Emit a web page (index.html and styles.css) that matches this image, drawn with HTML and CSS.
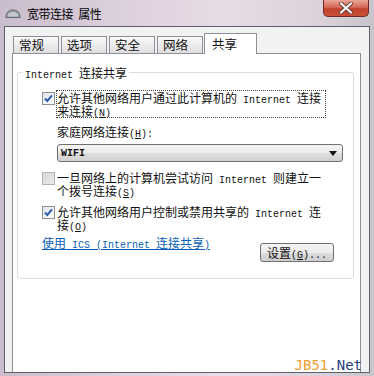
FILE: index.html
```html
<!DOCTYPE html>
<html lang="zh-CN">
<head>
<meta charset="utf-8">
<title>宽带连接 属性</title>
<link rel="stylesheet" href="styles.css">
</head>
<body>
<div class="window">
  <div class="titlebar">
    <svg class="ticon" width="16" height="9" viewBox="0 0 16 9">
      <path d="M1 8.5 C1 3.5 4 1 8 1 C12 1 15 3.5 15 8.5 Z" fill="#9aa0a8" stroke="#60656e" stroke-width="1"/>
      <path d="M4 7.5 V4.5 M6 7.5 V3.5 M8 7.5 V3 M10 7.5 V3.5 M12 7.5 V4.5" stroke="#f2f4f6" stroke-width="1"/>
    </svg>
    <span class="title">宽带连接 属性</span>
    <div class="close">
      <svg width="16" height="12" viewBox="0 0 16 12">
        <path d="M3 1.5 L13 10.5 M13 1.5 L3 10.5" stroke="#6b3a33" stroke-width="4" stroke-linecap="round"/>
        <path d="M3 1.5 L13 10.5 M13 1.5 L3 10.5" stroke="#ffffff" stroke-width="2.2" stroke-linecap="round"/>
      </svg>
    </div>
  </div>
  <div class="client">
    <div class="tabs">
      <div class="tab">常规</div>
      <div class="tab">选项</div>
      <div class="tab">安全</div>
      <div class="tab">网络</div>
      <div class="tab tab-active">共享</div>
    </div>
    <div class="panel">
      <fieldset class="group">
        <legend class="group-title"><span class="en">Internet </span>连接共享</legend>
        <div class="group-body">
          <div class="opt">
            <span class="cb cb-checked">
              <svg width="13" height="13" viewBox="0 0 13 13"><path d="M3 6.5 L5.3 9 L10 3.3" fill="none" stroke="#2c5fae" stroke-width="2"/></svg>
            </span>
            <span class="lbl lbl-focus">允许其他网络用户通过此计算机的<span class="en"> Internet </span>连接来连接<span class="en">(<u>N</u>)</span></span>
          </div>
          <div class="field-label">家庭网络连接<span class="en">(<u>H</u>):</span></div>
          <div class="select">
            <span class="select-value">WIFI</span>
            <svg width="8" height="5" viewBox="0 0 8 5"><path d="M0 0 H8 L4 5 Z" fill="#111"/></svg>
          </div>
          <div class="opt opt-second">
            <span class="cb cb-disabled"></span>
            <span class="lbl">一旦网络上的计算机尝试访问<span class="en"> Internet </span>则建立一个拨号连接<span class="en">(<u>S</u>)</span></span>
          </div>
          <div class="opt opt-third">
            <span class="cb cb-checked">
              <svg width="13" height="13" viewBox="0 0 13 13"><path d="M3 6.5 L5.3 9 L10 3.3" fill="none" stroke="#2c5fae" stroke-width="2"/></svg>
            </span>
            <span class="lbl">允许其他网络用户控制或禁用共享的<span class="en"> Internet </span>连接<span class="en">(<u>O</u>)</span></span>
          </div>
          <div class="footer-row">
            <a class="link" href="#">使用<span class="en"> ICS (Internet </span>连接共享<span class="en">)</span></a>
            <div class="btn">设置<span class="en">(<u>G</u>)...</span></div>
          </div>
        </div>
      </fieldset>
    </div>
  </div>
  <div class="watermark"><span class="wm-a">JB51</span><span class="wm-b">.Net</span></div>
</div>
</body>
</html>
```
FILE: styles.css
```css
* { box-sizing: border-box; }
html, body { margin: 0; padding: 0; }
body {
  width: 374px;
  height: 376px;
  overflow: hidden;
  font-family: "Noto Sans CJK SC", sans-serif;
  font-size: 12px;
  color: #111;
}
.en {
  font-family: "Liberation Mono", monospace;
  font-size: 10px;
  line-height: 0;
}
.window {
  position: relative;
  height: 376px;
  padding: 0 4px 3px 4px;
  display: flex;
  flex-direction: column;
  background: linear-gradient(90deg, #c9bccc 0%, #dccfdc 30%, #e8dce6 60%, #ddd2dc 85%, #c8c4cc 100%);
}
.titlebar {
  height: 26px;
  flex-shrink: 0;
  display: flex;
  align-items: center;
}
.ticon { margin-left: 1px; margin-top: 1px; }
.title {
  margin-left: 6px;
  font-size: 12px;
  letter-spacing: -0.5px;
  word-spacing: 3px;
  color: #000;
}
.close {
  margin-left: auto;
  margin-right: 1px;
  align-self: flex-start;
  width: 46px;
  height: 17px;
  border: 1px solid #6e2c24;
  border-top: none;
  border-radius: 0 0 5px 5px;
  background: linear-gradient(#e9a598 0%, #d46a58 45%, #c2412c 55%, #c9503a 100%);
  display: flex;
  align-items: center;
  justify-content: center;
}
.client {
  flex: 1;
  background: #f2f2f2;
  border: 1px solid #5d5f66;
  padding: 6px 8px 0 7px;
  display: flex;
  flex-direction: column;
}
.tabs {
  height: 20px;
  flex-shrink: 0;
  display: flex;
  align-items: flex-end;
  gap: 2px;
  padding-left: 1px;
  position: relative;
  z-index: 1;
}
.tab {
  width: 46px;
  height: 17px;
  padding-left: 5px;
  border: 1px solid #8d9099;
  border-bottom: none;
  background: linear-gradient(#fbfbfb, #ececec 50%, #dedede);
  line-height: 16px;
  font-size: 12.5px;
  color: #111;
}
.tab-active {
  width: 53px;
  height: 21px;
  margin-left: -1px;
  margin-bottom: -1px;
  padding-left: 7px;
  background: #fff;
  line-height: 19px;
}
.panel {
  flex: 1;
  background: #fff;
  border: 1px solid #8d9099;
  border-bottom: none;
}
.group {
  margin: 12px 0 0 4px;
  padding: 0;
  width: 337px;
  min-width: 0;
  border: 1px solid #d5dfe5;
  border-radius: 3px;
}
.group-title {
  margin-left: 5px;
  padding: 0 2px;
  line-height: 13px;
}
.group-body {
  padding: 11px 0 16px 24px;
  display: flex;
  flex-direction: column;
  align-items: flex-start;
}
.opt {
  display: flex;
  align-items: flex-start;
  line-height: 13px;
}
.opt-second { margin-top: 8px; }
.opt-third { margin-top: 6px; }
.cb {
  width: 13px;
  height: 13px;
  margin-top: 2px;
  margin-right: 1px;
  flex-shrink: 0;
  display: block;
}
.cb svg { display: block; }
.cb-checked {
  border: 1px solid #8e8f8f;
  background: linear-gradient(135deg, #dfe6ee, #ffffff);
}
.cb-checked svg { margin: -1px 0 0 -1px; }
.cb-disabled {
  border: 1px solid #b4b4b4;
  background: linear-gradient(135deg, #d6d6d6, #ececec);
}
.lbl {
  width: 270px;
  border: 1px solid transparent;
}
.lbl-focus { border: 1px dotted #444; }
.field-label {
  margin: 7px 0 0 15px;
  line-height: 13px;
}
.select {
  margin: 6px 0 0 15px;
  width: 286px;
  height: 18px;
  padding: 0 5px 0 3px;
  border: 1px solid #707070;
  border-radius: 3px;
  background: linear-gradient(#f4f4f4, #ebebeb 50%, #dedede 51%, #d2d2d2);
  display: flex;
  align-items: center;
  justify-content: space-between;
}
.select-value {
  font-family: "Liberation Mono", monospace;
  font-weight: bold;
  font-size: 10px;
}
.footer-row {
  margin-top: 4px;
  align-self: stretch;
  display: flex;
  align-items: flex-start;
}
.link {
  color: #0a5fb4;
  text-decoration: underline;
  line-height: 13px;
}
.btn {
  margin: 7px 19px 0 auto;
  width: 74px;
  height: 19px;
  border: 1px solid #707070;
  border-radius: 3px;
  background: linear-gradient(#f3f3f3, #ebebeb 50%, #dddddd 51%, #cfcfcf);
  line-height: 17px;
  text-align: center;
}
.watermark {
  position: absolute;
  right: 12px;
  bottom: 3px;
  font-family: "DejaVu Sans Mono", monospace;
  font-size: 14px;
  line-height: 15px;
}
.wm-a { color: #f0a030; }
.wm-b { color: #1f3f7f; }
```
